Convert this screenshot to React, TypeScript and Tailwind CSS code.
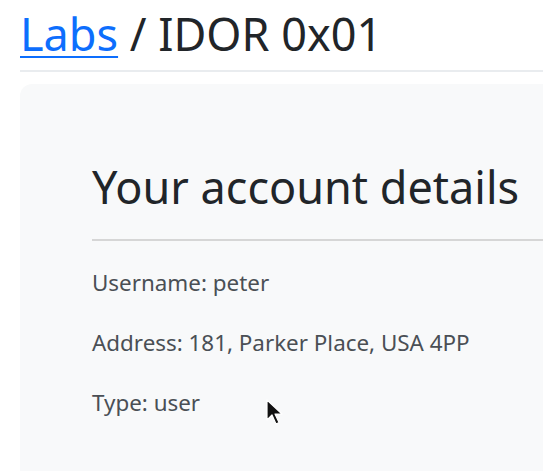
import React from 'react';

const details = [
  { label: 'Username', value: 'peter' },
  { label: 'Address', value: '181, Parker Place, USA 4PP' },
  { label: 'Type', value: 'user' },
];

const Cursor = () => (
  <svg width="18" height="28" viewBox="0 0 18 28" className="absolute left-[266px] top-[399px]">
    <path d="M1 1 L1 21 L6 16 L10 25 L13 23.5 L9 15 L16 15 Z" fill="#111" stroke="#fff" strokeWidth="1.2" strokeLinejoin="round" />
  </svg>
);

const App = () => {
  return (
    <div
      className="relative w-[543px] h-[471px] overflow-hidden bg-white"
      style={{ fontFamily: '"Noto Sans", "Open Sans", sans-serif' }}
    >
      <div className="pl-5 w-[900px]">
        {/* Breadcrumb title */}
        <h1 className="text-[45px] leading-[1.2] text-[#212529] pt-[7px] pb-[9px] font-normal">
          <a href="#" className="text-[#0d6efd] underline underline-offset-[5px] decoration-[2px]">Labs</a>
          <span> / IDOR 0x01</span>
        </h1>
        <hr className="border-t-2 border-[#e9ecef] mb-3" />

        {/* Account card */}
        <div className="bg-[#f8f9fa] rounded-xl pt-[76px] pl-[72px] h-[500px]">
          <h2 className="text-[45px] leading-[54px] text-[#212529] font-normal">Your account details</h2>
          <hr className="border-t-2 border-[#d6d6d6] mt-[25px] mb-[25px]" />
          <div className="flex flex-col gap-[27px] text-[22.4px] leading-[33px] text-[#4a4f55]">
            {details.map((d) => (
              <p key={d.label}>
                {d.label}: {d.value}
              </p>
            ))}
          </div>
        </div>
      </div>
      <Cursor />
    </div>
  );
};

export default App;
